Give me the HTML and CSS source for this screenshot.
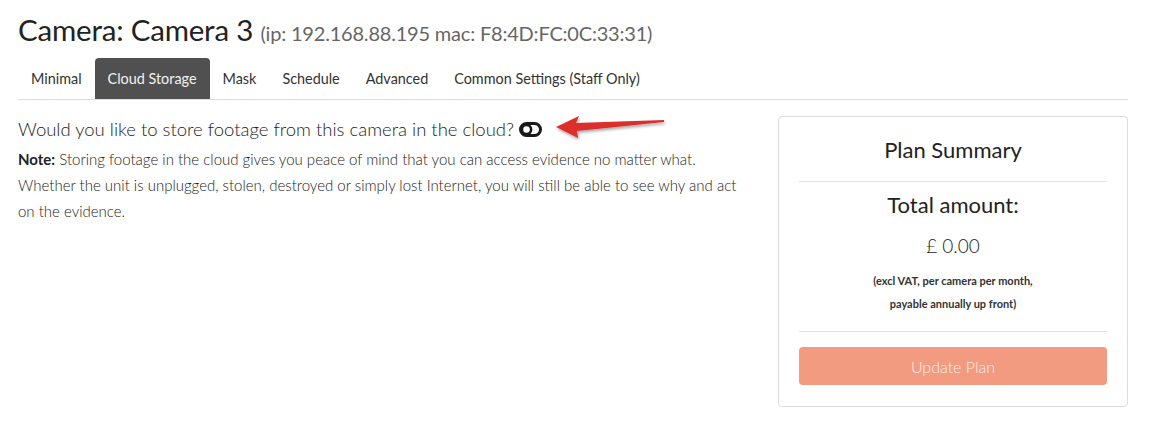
FILE: index.html
```html
<!DOCTYPE html>
<html>
<head>
<meta charset="utf-8">
<title>Camera 3</title>
<link rel="stylesheet" href="styles.css">
</head>
<body>
<div class="page">
  <h1 class="title">Camera: Camera 3 <small class="sub">(ip: 192.168.88.195 mac: F8:4D:FC:0C:33:31)</small></h1>
  <ul class="tabs">
    <li class="tab">Minimal</li>
    <li class="tab active">Cloud Storage</li>
    <li class="tab">Mask</li>
    <li class="tab">Schedule</li>
    <li class="tab">Advanced</li>
    <li class="tab">Common Settings (Staff Only)</li>
  </ul>
  <div class="row">
    <div class="main">
      <p class="question">Would you like to store footage from this camera in the cloud?
        <svg class="toggle" width="23" height="15" viewBox="0 0 23 15"><rect x="1.5" y="1.5" width="20" height="12" rx="6" ry="6" fill="none" stroke="#1a1a1a" stroke-width="3"/><circle cx="7.5" cy="7.5" r="4.6" fill="none" stroke="#1a1a1a" stroke-width="2.6"/></svg>
        <svg class="arrow" width="118" height="30" viewBox="0 0 118 30"><defs><filter id="sh" x="-10%" y="-30%" width="130%" height="170%"><feDropShadow dx="1" dy="2" stdDeviation="1.5" flood-color="#000" flood-opacity="0.35"/></filter></defs><path d="M2 15 L25 4 L22 11 L110 8 L110 10 L23 19 L24 26 Z" fill="#dc2f2c" filter="url(#sh)"/></svg>
      </p>
      <p class="note"><b>Note:</b> Storing footage in the cloud gives you peace of mind that you can access evidence no matter what. Whether the unit is unplugged, stolen, destroyed or simply lost Internet, you will still be able to see why and act on the evidence.</p>
    </div>
    <div class="side">
      <div class="panel">
        <h3 class="panel-title">Plan Summary</h3>
        <hr class="rule">
        <h3 class="total">Total amount:</h3>
        <div class="price">£ 0.00</div>
        <div class="terms">(excl VAT, per camera per month,<br>payable annually up front)</div>
        <hr class="rule">
        <button class="btn" disabled>Update Plan</button>
      </div>
    </div>
  </div>
</div>
</body>
</html>
```
FILE: styles.css
```css
html, body { margin: 0; padding: 0; background: #fff; }
body { font-family: Lato, "Open Sans", sans-serif; color: #333; }
.page { padding: 10px 43px 0 18px; }
.title { margin: 0; font-family: Lato, sans-serif; font-weight: 400; font-size: 29.5px; line-height: 40px; color: #222; letter-spacing: -0.2px; }
.sub { font-size: 20px; color: #666; font-weight: 400; }
.tabs { list-style: none; margin: 5px 0 0; padding: 0; display: flex; border-bottom: 1px solid #ddd; height: 41px; }
.tab { font-size: 14.4px; color: #333; padding: 0 13px; line-height: 41px; border-radius: 4px 4px 0 0; }
.tab.active { background: #505050; color: #f2f2f2; }
.row { display: flex; gap: 30px; margin-top: 16px; }
.main { width: 730px; }
.question { margin: 0; font-size: 18.5px; font-weight: 300; color: #222; line-height: 24px; display: flex; align-items: center; }
.toggle { margin-left: 5px; }
.arrow { margin-left: 12px; margin-top: -4px; }
.note { margin: 4px 0 0; font-size: 15px; font-weight: 300; line-height: 26px; color: #222; }
.note b { font-weight: 700; }
.side { width: 350px; }
.panel { border: 1px solid #ddd; border-radius: 4px; padding: 17px 20px 21px; text-align: center; }
.panel-title { margin: 0; font-size: 22px; font-weight: 400; color: #222; line-height: 32px; }
.rule { border: 0; border-top: 1px solid #e2e2e2; margin: 15px 0 8px; }
.total { margin: 0; font-size: 22px; font-weight: 400; color: #222; line-height: 30px; }
.price { margin-top: 13px; font-size: 19px; font-weight: 300; color: #222; line-height: 26px; }
.terms { margin-top: 10px; font-size: 11px; font-weight: 700; color: #333; line-height: 23px; }
.terms + .rule { margin: 16px 0 15px; }
.btn { display: block; width: 100%; height: 38px; border: 0; border-radius: 4px; background: #f29b80; color: #fdeee9; font-family: Lato, sans-serif; font-size: 16px; font-weight: 300; }
```
